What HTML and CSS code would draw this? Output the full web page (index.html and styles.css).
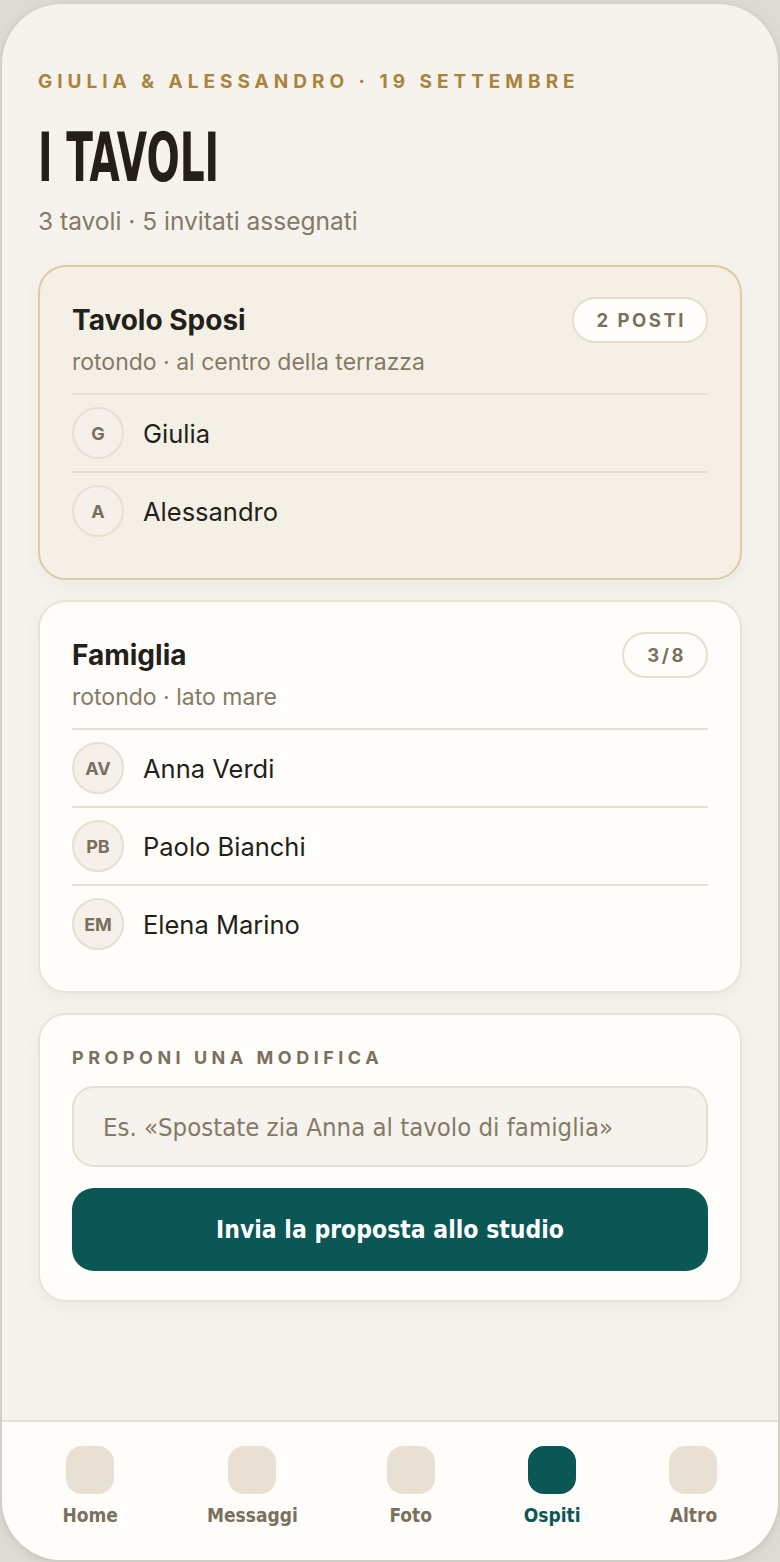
FILE: index.html
```html
<!DOCTYPE html>
<html lang="it">

<head>
    <meta charset="UTF-8">
    <title>I tavoli</title>
    <link rel="stylesheet" href="styles.css">
</head>

<body>
    <div class="phone">
        <main class="contenuto">
            <p class="occhiello">Giulia &amp; Alessandro · 19 settembre</p>
            <h1 class="titolo">I tavoli</h1>
            <p class="sottotitolo">3 tavoli · 5 invitati assegnati</p>

            <!-- Tavolo degli sposi -->
            <section class="tavolo sposi">
                <div class="testa">
                    <h2>Tavolo Sposi</h2>
                    <span class="posti">2 posti</span>
                </div>
                <p class="nota">rotondo · al centro della terrazza</p>
                <ul class="invitati">
                    <li><span class="iniziali">G</span>Giulia</li>
                    <li><span class="iniziali">A</span>Alessandro</li>
                </ul>
            </section>

            <!-- Tavolo famiglia -->
            <section class="tavolo">
                <div class="testa">
                    <h2>Famiglia</h2>
                    <span class="posti">3/8</span>
                </div>
                <p class="nota">rotondo · lato mare</p>
                <ul class="invitati">
                    <li><span class="iniziali">AV</span>Anna Verdi</li>
                    <li><span class="iniziali">PB</span>Paolo Bianchi</li>
                    <li><span class="iniziali">EM</span>Elena Marino</li>
                </ul>
            </section>

            <!-- Proposta di modifica -->
            <section class="tavolo proposta">
                <label for="modifica" class="etichetta">Proponi una modifica</label>
                <input type="text" id="modifica" placeholder="Es. «Spostate zia Anna al tavolo di famiglia»">
                <button class="invia">Invia la proposta allo studio</button>
            </section>
        </main>

        <nav class="barra">
            <a class="voce"><span class="icona"></span>Home</a>
            <a class="voce"><span class="icona"></span>Messaggi</a>
            <a class="voce"><span class="icona"></span>Foto</a>
            <a class="voce attiva"><span class="icona"></span>Ospiti</a>
            <a class="voce"><span class="icona"></span>Altro</a>
        </nav>
    </div>
</body>

</html>
```

FILE: styles.css
```css
body {
    margin: 0;
    background-color: #dedbd4;
    font-family: Inter, "Noto Sans", sans-serif;
    color: #231f19;
}

.phone {
    margin: 4px 2px 2px 2px;
    height: 1556px;
    border-radius: 60px;
    background-color: #f6f3ee;
    box-shadow: 0 2px 10px rgba(80, 70, 50, 0.18);
    display: flex;
    flex-direction: column;
    overflow: hidden;
}

.contenuto {
    flex: 1;
    padding: 66px 36px 0 36px;
}

.occhiello {
    margin: 0;
    color: #a8843c;
    font-size: 19px;
    font-weight: 700;
    letter-spacing: 5px;
    text-transform: uppercase;
    line-height: 24px;
}

.titolo {
    margin: 29px 0 0 0;
    font-family: "Liberation Sans Narrow", "DejaVu Sans Condensed", sans-serif;
    font-size: 68px;
    line-height: 70px;
    font-weight: 700;
    text-transform: uppercase;
    color: #251f18;
    transform: scaleX(0.64);
    transform-origin: left;
}

.sottotitolo {
    margin: 13px 0 29px 0;
    color: #847a66;
    font-size: 24.5px;
    line-height: 30px;
}

.tavolo {
    background-color: #fefdf9;
    border: 2px solid #e9e3d7;
    border-radius: 28px;
    padding: 30px 32px 29px 32px;
    margin-bottom: 20px;
    box-shadow: 0 6px 18px rgba(90, 75, 50, 0.06);
}

.tavolo.sposi {
    background-color: #f5f0e6;
    border-color: #dccba4;
}

.testa {
    display: flex;
    justify-content: space-between;
    align-items: center;
}

.testa h2 {
    margin: 0;
    font-size: 28px;
    font-weight: 700;
    line-height: 36px;
}

.posti {
    background-color: #fefdf9;
    border: 2px solid #e6dfd0;
    border-radius: 999px;
    padding: 0 20px 0 23px;
    height: 42px;
    line-height: 42px;
    font-size: 18.5px;
    font-weight: 700;
    letter-spacing: 2.5px;
    color: #7a705e;
    text-transform: uppercase;
}

.nota {
    margin: 4px 0 16px 0;
    color: #847a66;
    font-size: 23px;
    line-height: 30px;
}

.invitati {
    list-style: none;
    margin: 0;
    padding: 0;
}

.invitati li {
    display: flex;
    align-items: center;
    gap: 19px;
    height: 76px;
    border-top: 2px solid #e8e1d3;
    font-size: 25.5px;
}

.iniziali {
    width: 48px;
    height: 48px;
    border-radius: 50%;
    border: 2px solid #e6dfd2;
    background-color: #f5f1ea;
    display: flex;
    align-items: center;
    justify-content: center;
    font-size: 18px;
    font-weight: 700;
    color: #7a705e;
}

.etichetta {
    display: block;
    margin: 2px 0 18px 0;
    color: #7a705e;
    font-size: 18px;
    font-weight: 700;
    letter-spacing: 4.5px;
    text-transform: uppercase;
}

.proposta input {
    display: block;
    box-sizing: border-box;
    width: 100%;
    height: 81px;
    border: 2px solid #e6dfd0;
    border-radius: 22px;
    background-color: #f6f3ee;
    padding: 0 29px;
    font-family: "Liberation Sans Narrow", "DejaVu Sans Condensed", sans-serif;
    font-size: 25.5px;
}

.proposta input::placeholder {
    color: #847a66;
}

.invia {
    display: block;
    width: 100%;
    height: 83px;
    margin: 21px 0 0 0;
    border: none;
    border-radius: 22px;
    background-color: #0b5756;
    color: white;
    font-family: "Liberation Sans Narrow", "DejaVu Sans Condensed", sans-serif;
    font-size: 24.5px;
    font-weight: 700;
}

.barra {
    height: 140px;
    border-top: 2px solid #e8e2d6;
    background-color: #fefdf9;
    display: flex;
    justify-content: space-around;
    padding: 24px 16px 0 16px;
    box-sizing: border-box;
}

.voce {
    display: flex;
    flex-direction: column;
    align-items: center;
    gap: 10px;
    font-family: "Liberation Sans Narrow", "DejaVu Sans Condensed", sans-serif;
    font-size: 19px;
    font-weight: 700;
    color: #7a705e;
}

.icona {
    width: 48px;
    height: 48px;
    border-radius: 16px;
    background-color: #e8e0d2;
}

.voce.attiva {
    color: #0b5756;
}

.voce.attiva .icona {
    background-color: #0b5756;
}
```
